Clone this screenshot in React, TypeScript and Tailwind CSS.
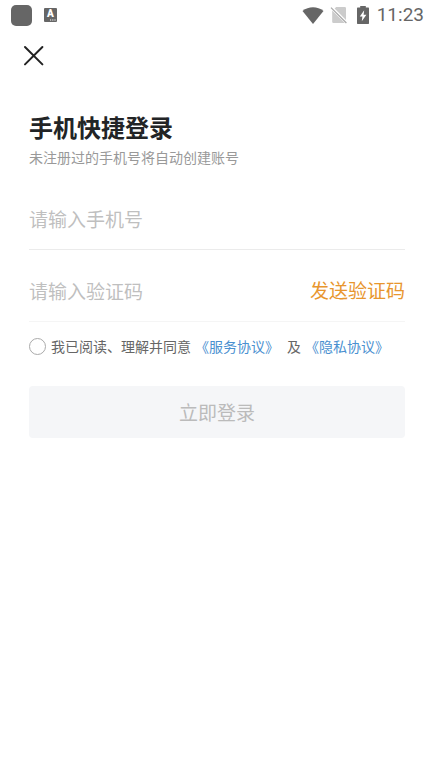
import { useState } from "react";

function StatusBar() {
  return (
    <div className="flex h-[30px] items-center justify-between pr-[10px] pl-[11px] text-[#666666]">
      <div className="flex items-center gap-3">
        <span className="size-[21px] rounded-[5px] bg-[#666666]" />
        <span className="flex h-[14px] w-[13px] flex-col items-center rounded-[1px] bg-[#666666] font-[Roboto,sans-serif] text-[10px] leading-[11px] font-black text-white">
          A
          <svg className="self-end" width="7" height="2" viewBox="0 0 7 2" aria-hidden="true">
            <path d="M0 1h1.2M2.2 1h1.2M4.4 1h1.2" stroke="currentColor" strokeWidth="1" />
          </svg>
        </span>
      </div>
      <div className="flex items-center">
        <svg width="22" height="17" viewBox="0 0 22 17" aria-hidden="true">
          <path d="M11 17 L0.5 3.9 C6.5 -0.9 15.5 -0.9 21.5 3.9 Z" fill="currentColor" />
        </svg>
        <svg className="ml-[6px]" width="18" height="18" viewBox="0 0 18 18" aria-hidden="true">
          <path d="M6.2 1 H14.8 Q16 1 16 2.2 V14 L4.6 2.6 Z" fill="#cccccc" />
          <path d="M2.2 4.4 L14.8 17 H3.4 Q2.2 17 2.2 15.8 Z" fill="#cccccc" />
          <path d="M1 1.6 L16.4 17" stroke="#a8a8a8" strokeWidth="1.2" />
        </svg>
        <svg className="ml-[9px]" width="12" height="18" viewBox="0 0 12 18" aria-hidden="true">
          <path
            d="M3.2 0 H8.8 V1.6 H11.4 Q12 1.6 12 2.4 V17.2 Q12 18 11.4 18 H0.6 Q0 18 0 17.2 V2.4 Q0 1.6 0.6 1.6 H3.2 Z"
            fill="currentColor"
          />
          <path d="M7.2 4.2 L2.8 10.4 H5.4 L4.8 15.2 L9.4 8.8 H6.6 Z" fill="#ffffff" />
        </svg>
        <span className="ml-2 font-[Roboto,sans-serif] text-[19px] leading-[30px]">11:23</span>
      </div>
    </div>
  );
}

export default function App() {
  const [phone, setPhone] = useState("");
  const [code, setCode] = useState("");
  const [agreed, setAgreed] = useState(false);

  return (
    <div className="min-h-screen bg-white font-['Noto_Sans_CJK_SC',sans-serif]">
      <StatusBar />

      <header className="flex px-[23px] pt-[15px]">
        <button type="button" aria-label="关闭" className="text-[#222222]">
          <svg width="21" height="21" viewBox="0 0 21 21" aria-hidden="true">
            <path
              d="M2 2 L19.4 19.4 M19.4 2 L2 19.4"
              fill="none"
              stroke="currentColor"
              strokeWidth="2"
              strokeLinecap="round"
            />
          </svg>
        </button>
      </header>

      <main className="px-[29px] pt-[43px]">
        <h1 className="text-[24px] leading-9 font-bold text-[#222426]">手机快捷登录</h1>
        <p className="text-[14px] leading-6 text-[#999999]">未注册过的手机号将自动创建账号</p>

        <form onSubmit={(e) => e.preventDefault()}>
          <div className="mt-[19px] flex h-[62px] items-center border-b border-[#ebebeb]">
            <input
              type="tel"
              aria-label="手机号"
              placeholder="请输入手机号"
              value={phone}
              onChange={(e) => setPhone(e.target.value)}
              className="h-10 min-w-0 flex-1 text-[19px] text-[#222426] outline-none placeholder:text-[#bfbfbf]"
            />
          </div>

          <div className="mt-[10px] flex h-[62px] items-center border-b border-[#f5f5f5]">
            <input
              type="text"
              inputMode="numeric"
              aria-label="验证码"
              placeholder="请输入验证码"
              value={code}
              onChange={(e) => setCode(e.target.value)}
              className="h-10 min-w-0 flex-1 text-[19px] text-[#222426] outline-none placeholder:text-[#bfbfbf]"
            />
            <button type="button" className="h-10 shrink-0 text-[19px] text-[#e8962e]">
              发送验证码
            </button>
          </div>

          <div className="mt-3 flex items-center text-[14px] leading-6 text-[#666666]">
            <input
              id="agree"
              type="checkbox"
              checked={agreed}
              onChange={(e) => setAgreed(e.target.checked)}
              className="size-[17px] shrink-0 appearance-none rounded-full border border-[#aaaaaa] checked:border-[#e8962e] checked:bg-[#e8962e]"
            />
            <label htmlFor="agree" className="ml-[5px]">
              我已阅读、理解并同意
            </label>
            <a href="#service" className="ml-1 text-[#4a90d0]">
              《服务协议》
            </a>
            <span className="ml-2">及</span>
            <a href="#privacy" className="ml-1 text-[#4a90d0]">
              《隐私协议》
            </a>
          </div>

          <button
            type="submit"
            className="mt-7 h-[52px] w-full rounded bg-[#f5f6f8] text-[19px] text-[#bbbbbb]"
          >
            立即登录
          </button>
        </form>
      </main>
    </div>
  );
}
